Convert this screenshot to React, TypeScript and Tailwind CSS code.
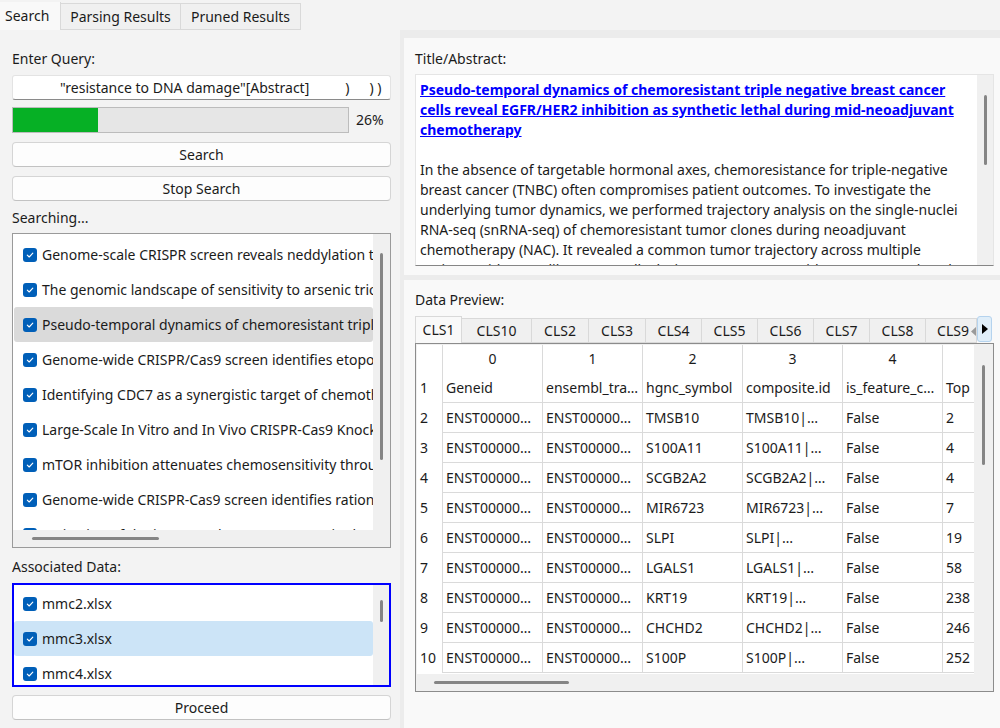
import React from 'react';

const titles = [
  'Genome-scale CRISPR screen reveals neddylation to contribute to cisplatin resistance',
  'The genomic landscape of sensitivity to arsenic trioxide uncovered by genome-wide CRISPR',
  'Pseudo-temporal dynamics of chemoresistant triple negative breast cancer cells',
  'Genome-wide CRISPR/Cas9 screen identifies etoposide response modulators',
  'Identifying CDC7 as a synergistic target of chemotherapy in resistant cancers',
  'Large-Scale In Vitro and In Vivo CRISPR-Cas9 Knockout Screens Identify a Role',
  'mTOR inhibition attenuates chemosensitivity through the induction of chemotherapy',
  'Genome-wide CRISPR-Cas9 screen identifies rationally designed combination',
  'Activation of the integrated stress response in drug-tolerant cancer cells',
];

const files = ['mmc2.xlsx', 'mmc3.xlsx', 'mmc4.xlsx'];

const abstract = [
  'In the absence of targetable hormonal axes, chemoresistance for triple-negative',
  'breast cancer (TNBC) often compromises patient outcomes. To investigate the',
  'underlying tumor dynamics, we performed trajectory analysis on the single-nuclei',
  'RNA-seq (snRNA-seq) of chemoresistant tumor clones during neoadjuvant',
  'chemotherapy (NAC). It revealed a common tumor trajectory across multiple',
  'patients with HER2-like tumor cells during NAC. Genome-wide CRISPR-Cas9 knockout',
];

const dataTabs = [
  { name: 'CLS1', w: 'w-[47px]' },
  { name: 'CLS10', w: 'w-[70px]' },
  { name: 'CLS2', w: 'w-[57px]' },
  { name: 'CLS3', w: 'w-[57px]' },
  { name: 'CLS4', w: 'w-[56px]' },
  { name: 'CLS5', w: 'w-[56px]' },
  { name: 'CLS6', w: 'w-[56px]' },
  { name: 'CLS7', w: 'w-[56px]' },
  { name: 'CLS8', w: 'w-[56px]' },
  { name: 'CLS9', w: 'w-[51px]' },
];

const symbols = [
  ['TMSB10', '2'],
  ['S100A11', '4'],
  ['SCGB2A2', '4'],
  ['MIR6723', '7'],
  ['SLPI', '19'],
  ['LGALS1', '58'],
  ['KRT19', '238'],
  ['CHCHD2', '246'],
  ['S100P', '252'],
];

const rows: string[][] = [
  ['Geneid', 'ensembl_tra…', 'hgnc_symbol', 'composite.id', 'is_feature_c…', 'Top'],
  ...symbols.map(([s, t]) => ['ENST00000…', 'ENST00000…', s, s + '|…', 'False', t]),
];

const CheckBox = () => (
  <span className="w-[14px] h-[14px] rounded-[3px] bg-[#005fb8] flex items-center justify-center shrink-0">
    <svg width="10" height="10" viewBox="0 0 10 10">
      <path d="M2.3 5.2 L4.2 7 L7.8 3.2" stroke="white" strokeWidth="1.1" fill="none" strokeLinecap="round" strokeLinejoin="round" />
    </svg>
  </span>
);

const Button = ({ label }: { label: string }) => (
  <div className="h-[25px] rounded-[4px] border border-[#d5d5d5] border-b-[#c2c2c2] bg-[#fdfdfd] flex items-center justify-center text-[#1b1b1b]">
    {label}
  </div>
);

const App: React.FC = () => {
  return (
    <div className="w-[1000px] h-[728px] bg-[#f3f3f3] flex flex-col overflow-hidden font-['Segoe_UI','Noto_Sans',sans-serif] text-[14px] text-[#1b1b1b] leading-[20px]">
      {/* top tabs */}
      <div className="h-[30px] flex items-end shrink-0">
        <div className="h-[28px] w-[61px] border-r border-[#d9d9d9] bg-[#f9f9f9] flex items-center pl-[5px]">Search</div>
        <div className="h-[27px] w-[120px] border-t border-r border-b border-[#d9d9d9] bg-[#f0f0f0] flex items-center justify-center">Parsing Results</div>
        <div className="h-[27px] w-[120px] border-t border-r border-b border-[#d9d9d9] bg-[#f0f0f0] flex items-center justify-center">Pruned Results</div>
      </div>

      <div className="flex flex-1 min-h-0">
        {/* left column */}
        <div className="w-[400px] shrink-0 pl-[12px] pr-[9px] pt-[19px] flex flex-col">
          <div className="h-[20px]">Enter Query:</div>
          <div className="mt-[6px] h-[25px] bg-white border border-[#e3e3e3] border-b-[#8a8a8a] rounded-[3px] flex items-center whitespace-pre overflow-hidden">
            <span className="ml-[47px]">"resistance to DNA damage"[Abstract]</span>
            <span className="ml-[36px]">)</span>
            <span className="ml-[20px]">) )</span>
          </div>
          <div className="mt-[7px] h-[26px] flex items-center">
            <div className="w-[337px] h-[26px] bg-[#e6e6e6] border border-[#bcbcbc] flex">
              <div className="w-[85px] bg-[#06b025]" />
            </div>
            <span className="ml-[7px]">26%</span>
          </div>
          <div className="mt-[9px]"><Button label="Search" /></div>
          <div className="mt-[9px]"><Button label="Stop Search" /></div>
          <div className="mt-[7px] h-[20px]">Searching...</div>

          {/* search results list */}
          <div className="mt-[5px] h-[315px] border border-[#9a9a9a] bg-white flex flex-col">
            <div className="flex flex-1 min-h-0">
              <div className="flex-1 min-w-0 pl-[1px] pt-[3px] overflow-hidden">
                {titles.map((t, i) => (
                  <div key={i} className={`h-[35px] flex items-center gap-[5px] pl-[9px] rounded-[3px] whitespace-nowrap ${i === 2 ? 'bg-[#dadada]' : ''}`}>
                    <CheckBox />
                    <span>{t}</span>
                  </div>
                ))}
              </div>
              <div className="w-[17px] shrink-0 bg-[#f0f0f0] flex justify-center pt-[19px]">
                <div className="w-[3px] h-[207px] rounded-full bg-[#858585]" />
              </div>
            </div>
            <div className="h-[17px] shrink-0 bg-[#f0f0f0] flex items-center pl-[19px]">
              <div className="w-[127px] h-[3px] rounded-full bg-[#858585]" />
            </div>
          </div>

          <div className="mt-[9px] h-[20px]">Associated Data:</div>
          <div className="mt-[6px] h-[104px] border-2 border-[#0000ff] bg-white flex">
            <div className="flex-1 min-w-0 pt-[1px]">
              {files.map((f, i) => (
                <div key={f} className={`h-[35px] flex items-center gap-[5px] pl-[9px] rounded-[3px] ${i === 1 ? 'bg-[#cce4f7]' : ''}`}>
                  <CheckBox />
                  <span>{f}</span>
                </div>
              ))}
            </div>
            <div className="w-[16px] shrink-0 bg-[#f0f0f0] flex justify-center pt-[15px]">
              <div className="w-[3px] h-[22px] rounded-full bg-[#858585]" />
            </div>
          </div>
          <div className="mt-[8px]"><Button label="Proceed" /></div>
        </div>

        {/* right column */}
        <div className="flex-1 min-w-0 overflow-hidden bg-[#ececec] pl-[4px] pt-[8px] flex flex-col gap-[5px]">
          {/* title / abstract pane */}
          <div className="h-[237px] min-w-0 bg-[#f9f9f9] pl-[11px] pr-[6px] pt-[11px] flex flex-col">
            <div className="h-[20px]">Title/Abstract:</div>
            <div className="mt-[5px] h-[192px] min-w-0 bg-white border border-[#e5e5e5] border-b-[#868686] flex">
              <div className="flex-1 min-w-0 pl-[4px] pt-[5px] overflow-hidden whitespace-nowrap">
                <div className="font-bold text-[#0000ff] underline">
                  <div>Pseudo-temporal dynamics of chemoresistant triple negative breast cancer</div>
                  <div>cells reveal EGFR/HER2 inhibition as synthetic lethal during mid-neoadjuvant</div>
                  <div>chemotherapy</div>
                </div>
                <div className="h-[20px]" />
                {abstract.map((l, i) => (
                  <div key={i}>{l}</div>
                ))}
              </div>
              <div className="w-[16px] shrink-0 bg-[#f0f0f0] flex justify-center pt-[20px]">
                <div className="w-[3px] h-[70px] rounded-full bg-[#858585]" />
              </div>
            </div>
          </div>

          {/* data preview pane */}
          <div className="flex-1 min-w-0 bg-[#f9f9f9] pl-[11px] pr-[6px] pt-[10px] flex flex-col">
            <div className="h-[20px]">Data Preview:</div>
            <div className="mt-[6px] h-[27px] flex items-end">
              {dataTabs.map((t, i) => (
                <div
                  key={t.name}
                  className={`${t.w} relative shrink-0 flex items-center justify-center border-t border-r border-[#d9d9d9] overflow-hidden whitespace-nowrap ${
                    i === 0 ? 'h-[27px] bg-[#f9f9f9] border-l' : 'h-[25px] bg-[#f0f0f0] border-b'
                  } ${i === 9 ? 'pl-[4px]' : ''}`}
                >
                  {t.name}
                  {i === 9 && (
                    <span className="absolute right-0 top-[6px] w-[7px] h-[12px] bg-[#f0f0f0] flex items-center justify-end">
                      <svg width="5" height="9" viewBox="0 0 5 9"><path d="M5 0 L0 4.5 L5 9 Z" fill="#9a9a9a" /></svg>
                    </span>
                  )}
                </div>
              ))}
              <div className="w-[15px] h-[26px] self-start shrink-0 bg-[#e0eef9] border border-[#b5d3ee] rounded-[3px] flex items-center justify-center">
                <svg width="6" height="10" viewBox="0 0 6 10"><path d="M0 0 L6 5 L0 10 Z" fill="#000" /></svg>
              </div>
            </div>

            {/* table frame */}
            <div className="h-[349px] min-w-0 border border-[#8c8c8c] bg-[#f0f0f0] p-[1px] flex flex-col">
              <div className="flex flex-1 min-h-0">
                <div className="flex-1 min-w-0 bg-white overflow-hidden">
                  <div className="grid grid-cols-[26px_100px_100px_100px_100px_100px_100px] w-[626px]">
                    <div className="h-[28px] border-r border-[#dadada]" />
                    {['0', '1', '2', '3', '4', '5'].map((h) => (
                      <div key={h} className="h-[28px] border-r border-[#dadada] flex items-center justify-center">{h}</div>
                    ))}
                    {rows.map((r, ri) => (
                      <React.Fragment key={ri}>
                        <div className="h-[30px] border-r border-[#dadada] flex items-center pl-[3px]">{ri + 1}</div>
                        {r.map((c, ci) => (
                          <div key={ci} className="h-[30px] border-r border-b border-[#dadada] flex items-center pl-[3px] whitespace-nowrap overflow-hidden">
                            {c}
                          </div>
                        ))}
                      </React.Fragment>
                    ))}
                  </div>
                </div>
                <div className="w-[18px] shrink-0 bg-[#f0f0f0] flex justify-center pt-[20px]">
                  <div className="w-[3px] h-[100px] rounded-full bg-[#858585]" />
                </div>
              </div>
              <div className="h-[16px] shrink-0 bg-[#f0f0f0] flex items-center pl-[17px]">
                <div className="w-[135px] h-[3px] rounded-full bg-[#858585]" />
              </div>
            </div>
          </div>
        </div>
      </div>
    </div>
  );
};

export default App;
